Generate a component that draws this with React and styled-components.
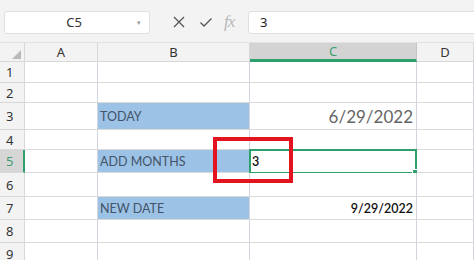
import React from "react";
import styled, { createGlobalStyle } from "styled-components";

const GlobalStyle = createGlobalStyle`
  html, body {
    margin: 0;
    padding: 0;
    background: #ffffff;
    overflow: hidden;
  }
`;

const columns = ["A", "B", "C", "D"];
const colWidths = "25px 73px 152px 167px 1fr";
const rowHeights = [21, 20, 27, 20, 23, 24, 23, 23, 23];

// cells with content, keyed by address
const cells = {
  B3: { text: "TODAY", fill: true },
  C3: { text: "6/29/2022", big: true },
  B5: { text: "ADD MONTHS", fill: true },
  C5: { text: "3", strong: true },
  B7: { text: "NEW DATE", fill: true },
  C7: { text: "9/29/2022", strong: true, right: true },
};

const selected = { col: "C", row: 5 };

const App = () => {
  return (
    <Wrapper>
      <GlobalStyle />
      <Toolbar>
        <NameBox>
          <NameText>C5</NameText>
          <Caret>&#9662;</Caret>
        </NameBox>
        <ToolIcons>
          <svg width="14" height="14" viewBox="0 0 14 14">
            <path d="M2 2 L12 12 M12 2 L2 12" stroke="#555" strokeWidth="1.3" fill="none" />
          </svg>
          <svg width="14" height="14" viewBox="0 0 14 14">
            <path d="M1.5 7.5 L5 11 L12.5 3.5" stroke="#555" strokeWidth="1.3" fill="none" />
          </svg>
          <Fx>fx</Fx>
        </ToolIcons>
        <FormulaBox>3</FormulaBox>
      </Toolbar>

      <Sheet>
        <Corner>
          <svg width="9" height="9" viewBox="0 0 9 9">
            <path d="M9 0 L9 9 L0 9 Z" fill="#b9b9b9" />
          </svg>
        </Corner>
        {columns.map((c) => (
          <ColHeader key={c} active={c === selected.col}>
            {c}
          </ColHeader>
        ))}

        {rowHeights.map((h, i) => {
          const row = i + 1;
          return (
            <React.Fragment key={row}>
              <RowHeader active={row === selected.row} style={{ height: h }}>
                {row}
              </RowHeader>
              {columns.map((c) => {
                const data = cells[c + row];
                const isSel = c === selected.col && row === selected.row;
                return (
                  <Cell key={c} fill={data && data.fill ? 1 : 0} right={data && (data.big || data.right) ? 1 : 0}>
                    {data && (
                      <CellText big={data.big ? 1 : 0} strong={data.strong ? 1 : 0} fill={data.fill ? 1 : 0}>
                        {data.text}
                      </CellText>
                    )}
                    {isSel && (
                      <Selection>
                        <Handle />
                      </Selection>
                    )}
                  </Cell>
                );
              })}
            </React.Fragment>
          );
        })}
      </Sheet>

      <Callout />
    </Wrapper>
  );
};

const Wrapper = styled.div`
  position: relative;
  width: 474px;
  height: 260px;
  overflow: hidden;
  font-family: "Noto Sans", "Open Sans", sans-serif;
`;

const Toolbar = styled.div`
  height: 43px;
  background: #f3f3f3;
  display: flex;
  align-items: center;
  padding: 2px 0 0 4px;
  box-sizing: border-box;
  border-bottom: 1px solid #e2e2e2;
`;

const NameBox = styled.div`
  width: 146px;
  height: 23px;
  box-sizing: border-box;
  background: #fff;
  border: 1px solid #e0e0e0;
  border-radius: 3px;
  display: flex;
  align-items: center;
`;

const NameText = styled.span`
  flex: 1;
  text-align: center;
  font-size: 13px;
  color: #333;
  padding-left: 6px;
`;

const Caret = styled.span`
  font-size: 7px;
  color: #999;
  width: 12px;
`;

const ToolIcons = styled.div`
  display: flex;
  align-items: center;
  gap: 13px;
  margin-left: 22px;
  width: 76px;
`;

const Fx = styled.span`
  font-family: "Liberation Serif", serif;
  font-style: italic;
  font-size: 17px;
  color: #b8b8b8;
  letter-spacing: -1px;
  margin-left: -2px;
`;

const FormulaBox = styled.div`
  flex: 1;
  height: 23px;
  margin-right: -6px;
  box-sizing: border-box;
  background: #fff;
  border: 1px solid #e0e0e0;
  border-radius: 3px;
  display: flex;
  align-items: center;
  padding-left: 11px;
  font-size: 13px;
  color: #222;
`;

const Sheet = styled.div`
  display: grid;
  grid-template-columns: ${colWidths};
  grid-auto-rows: auto;
`;

const Corner = styled.div`
  height: 19px;
  background: #f3f3f3;
  border-right: 1px solid #d8d8d8;
  border-bottom: 1px solid #d8d8d8;
  box-sizing: border-box;
  display: flex;
  align-items: flex-end;
  justify-content: flex-end;
  padding: 0 3px 2px 0;
`;

const ColHeader = styled.div`
  height: 19px;
  box-sizing: border-box;
  background: ${(p) => (p.active ? "#d3d3d3" : "#f3f3f3")};
  border-right: 1px solid ${(p) => (p.active ? "#c4c4c4" : "#d8d8d8")};
  border-bottom: ${(p) => (p.active ? "3px solid #2ea06b" : "1px solid #d8d8d8")};
  color: ${(p) => (p.active ? "#3f9d73" : "#333")};
  font-size: 13px;
  line-height: ${(p) => (p.active ? "17px" : "19px")};
  text-align: center;
`;

const RowHeader = styled.div`
  box-sizing: border-box;
  background: ${(p) => (p.active ? "#d6d6d6" : "#f3f3f3")};
  border-right: ${(p) => (p.active ? "2px solid #2ea06b" : "1px solid #d8d8d8")};
  border-bottom: 1px solid #d8d8d8;
  color: ${(p) => (p.active ? "#3f9d73" : "#333")};
  font-size: 13px;
  display: flex;
  align-items: center;
  padding-left: 6px;
`;

const Cell = styled.div`
  position: relative;
  box-sizing: border-box;
  background: ${(p) => (p.fill ? "#9cc2e6" : "#fff")};
  border-right: 1px solid #d3d5de;
  border-bottom: 1px solid #dadada;
  display: flex;
  align-items: center;
  justify-content: ${(p) => (p.right ? "flex-end" : "flex-start")};
  padding: 0 3px 0 2px;
  overflow: visible;
`;

const CellText = styled.span`
  font-family: "Lato", "Liberation Sans", sans-serif;
  font-size: ${(p) => (p.big ? "17px" : "12.5px")};
  font-weight: ${(p) => (p.strong ? 600 : 400)};
  color: ${(p) => (p.big ? "#666" : p.fill ? "#44546a" : "#111")};
  white-space: nowrap;
`;

const Selection = styled.div`
  position: absolute;
  left: -1px;
  top: -1px;
  right: -1px;
  bottom: -2px;
  border: 2px solid #2ea06b;
  pointer-events: none;
`;

const Handle = styled.div`
  position: absolute;
  right: -4px;
  bottom: -4px;
  width: 5px;
  height: 5px;
  background: #2ea06b;
  border: 1px solid #fff;
`;

const Callout = styled.div`
  position: absolute;
  left: 213px;
  top: 137px;
  width: 80px;
  height: 46px;
  box-sizing: border-box;
  border: 4px solid #e3141f;
`;

export default App;
